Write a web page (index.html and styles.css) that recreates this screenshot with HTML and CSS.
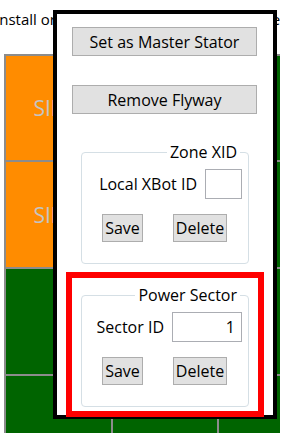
FILE: index.html
```html
<!DOCTYPE html>
<html lang="en">
<head>
    <meta charset="UTF-8">
    <meta name="viewport" content="width=device-width, initial-scale=1.0">
    <title>Flyway Stator Settings</title>
    <link rel="stylesheet" href="styles.css">
</head>
<body>
    <p class="hint">Install or remove a flyway by clicking a cell on the grid</p>

    <div class="grid-view">
        <div class="stator-grid">
            <div class="cell sid">SID 1</div>
            <div class="cell sid"></div>
            <div class="cell flyway"></div>
            <div class="cell sid">SID 3</div>
            <div class="cell sid"></div>
            <div class="cell flyway"></div>
            <div class="cell flyway"></div>
            <div class="cell flyway"></div>
            <div class="cell flyway"></div>
            <div class="cell flyway"></div>
            <div class="cell flyway"></div>
            <div class="cell flyway"></div>
        </div>
    </div>

    <div class="popup">
        <button class="wide-button">Set as Master Stator</button>
        <button class="wide-button">Remove Flyway</button>

        <fieldset class="group">
            <legend>Zone XID</legend>
            <div class="field-row">
                <label for="xbot-id">Local XBot ID</label>
                <input type="text" id="xbot-id" class="id-box short">
            </div>
            <div class="button-row">
                <button class="save-button">Save</button>
                <button class="delete-button">Delete</button>
            </div>
        </fieldset>

        <fieldset class="group power">
            <legend>Power Sector</legend>
            <div class="field-row">
                <label for="sector-id">Sector ID</label>
                <input type="text" id="sector-id" class="id-box long" value="1">
            </div>
            <div class="button-row">
                <button class="save-button">Save</button>
                <button class="delete-button">Delete</button>
            </div>
        </fieldset>

        <div class="highlight"></div>
    </div>
</body>
</html>
```

FILE: styles.css
```css
body {
    margin: 0;
    font-family: "Open Sans", sans-serif;
    font-size: 16px;
    color: #000;
    background-color: #fff;
    overflow: hidden;
}

.hint {
    margin: 0 0 0 -5px;
    width: 285px;
    height: 54px;
    padding-top: 9px;
    box-sizing: border-box;
    font-size: 15px;
    line-height: 20px;
    white-space: nowrap;
    overflow: hidden;
}

.grid-view {
    margin-left: 4px;
    width: 276px;
    height: 379px;
    overflow: hidden;
    background-color: #8c8c8c;
}

.stator-grid {
    display: grid;
    grid-template-columns: 105px 104px 104px;
    grid-template-rows: 104px 105px 105px 105px;
    gap: 2px;
    padding: 2px 0 0 2px;
}

.cell {
    display: flex;
    align-items: center;
    justify-content: center;
    font-size: 21px;
    color: #c4c4c4;
}

.sid {
    background-color: #ff8c00;
}

.flyway {
    background-color: #006400;
}

.popup {
    position: absolute;
    left: 53px;
    top: 10px;
    width: 224px;
    height: 409px;
    box-sizing: border-box;
    border: 4px solid #000;
    background-color: #fff;
    padding: 13px 16px 0 15px;
    display: flex;
    flex-direction: column;
}

button {
    font-family: "Open Sans", sans-serif;
    font-size: 16px;
    color: #000;
    background-color: #e1e1e1;
    border: 1px solid #adadad;
    border-radius: 0;
    padding: 0;
}

.wide-button {
    width: 185px;
    height: 29px;
}

.wide-button + .wide-button {
    margin-top: 29px;
}

.group {
    width: 168px;
    box-sizing: border-box;
    margin: 28px 0 0 9px;
    padding: 7px 6px 21px 0;
    border: 1px solid #d5dfe5;
    border-radius: 4px;
}

.group.power {
    margin-top: 21px;
}

.group legend {
    margin-left: auto;
    margin-right: 2px;
    padding: 0 3px;
    line-height: 20px;
}

.field-row {
    display: flex;
    align-items: center;
    justify-content: flex-end;
    gap: 8px;
}

.id-box {
    height: 30px;
    box-sizing: border-box;
    border: 1px solid #abadb3;
    font-family: "Open Sans", sans-serif;
    font-size: 16px;
    text-align: right;
    padding: 0 6px 0 0;
}

.short {
    width: 37px;
}

.long {
    width: 70px;
}

.button-row {
    display: flex;
    gap: 30px;
    margin-top: 15px;
    padding-left: 20px;
}

.save-button {
    width: 41px;
    height: 28px;
}

.delete-button {
    width: 54px;
    height: 28px;
}

.highlight {
    position: absolute;
    left: 9px;
    top: 258px;
    width: 198px;
    height: 145px;
    box-sizing: border-box;
    border: 6px solid #ff0000;
}
```
